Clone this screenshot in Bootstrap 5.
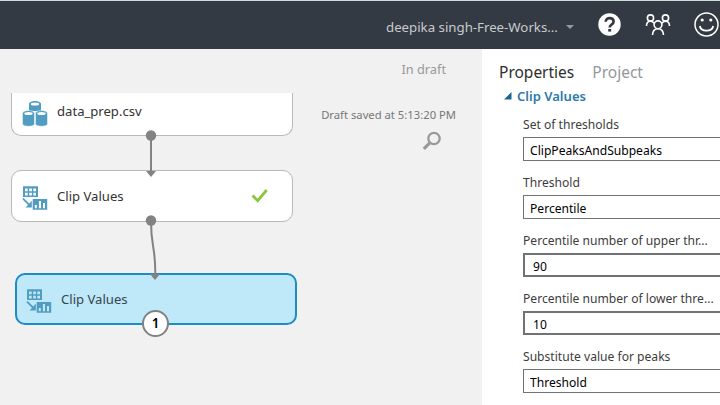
<!DOCTYPE html>
<html lang="en">
<head>
<meta charset="utf-8">
<meta name="viewport" content="width=device-width, initial-scale=1">
<title>Experiment</title>
<link href="https://cdn.jsdelivr.net/npm/bootstrap@5.3.0/dist/css/bootstrap.min.css" rel="stylesheet">
<script src="https://cdn.jsdelivr.net/npm/bootstrap@5.3.0/dist/js/bootstrap.bundle.min.js"></script>
<style>
  body { font-family: "Noto Sans", "Open Sans", sans-serif; font-size: 12.1px; line-height: 18px; color: #333; background: #fff; }
  .topbar { height: 49px; background: #343a43; border-top: 1px solid #cfdadd; padding: 3px 0 0 386px; color: #c8cacc; }
  .topbar svg { margin-bottom: 4px; }
  .workspace-name { font-size: 13.24px; width: 172px; }
  .caret { width: 0; border: 4px solid transparent; border-top-color: #98999b; border-bottom: 0; margin-left: 8px; }
  .help-icon { margin-left: 23.5px; }
  .people-icon { margin-left: 24px; }
  .smile-icon { margin-left: 23px; }
  .board { width: 482px; background: #f1f1f1; }
  .status { padding: 11px 26px 0 0; }
  .draft { font-size: 12.75px; color: #999; padding-right: 10px; }
  .saved { font-size: 11.26px; color: #777; margin-top: 28px; }
  .search-icon { margin: 7px 14px 0 0; }
  .module { left: 11px; width: 282px; height: 52px; background: #fff; border: 1.5px solid #b9b9b9; border-radius: 10px; padding: 0 0 0 10px; font-size: 13.1px; }
  .module-data { top: 44px; height: 43px; border-top: 0; border-radius: 0 0 10px 10px; padding-bottom: 6px; }
  .module-data .drums-icon { margin-top: 4px; }
  .module-clip { top: 121px; }
  .module-selected { left: 15px; top: 224px; height: 52px; background: #bfe8f8; border: 2px solid #1d8bc4; padding-left: 9px; color: #34464f; }
  .module svg { margin-right: 9px; }
  .module .check-icon { margin: 0 23px 0 auto; }
  .port-badge { left: 142px; top: 261px; width: 27px; height: 27px; background: #fff; border: 2px solid #828282; color: #000; font-size: 13.5px; font-weight: 600; padding-bottom: 1px; }
  .panel { padding: 12px 0 0 17px; min-width: 0; }
  .panel-tabs { font-size: 15.5px; line-height: 22px; gap: 18px; color: #2e2e2e; }
  .tab-off { color: #93989e; }
  .group-title { font-size: 13.06px; font-weight: 600; color: #2b7bab; margin: 4px 0 11px 5px; gap: 5px; }
  .fields { padding-left: 24px; gap: 13px; }
  .field { height: 45px; }
  .field label { height: 21px; line-height: 17px; white-space: nowrap; color: #3c3c3c; }
  .field .form-control { height: 24px; padding: 2px 6px 0; border: 1px solid #707274; border-right: 0; border-radius: 1px 0 0 1px; font-size: 12.1px; line-height: 18px; color: #000; }
  .field .numeric { border-width: 2px 0 2px 2px; border-radius: 0; padding: 2px 8px 0; }
</style>
</head>
<body class="vh-100 d-flex flex-column overflow-hidden">
<svg class="d-none">
  <symbol id="clip-glyph" viewBox="0 0 26 28">
    <g transform="translate(1 4.300)">
      <path fill="#519dc1" fill-rule="evenodd" d="M0 0h15v10.700H0zM2 2.200v2.800h2.700v-2.800zM6.200 2.200v2.800h2.700v-2.800zM10.300 2.200v2.800h2.700v-2.800zM2 6.500v2.800h2.700v-2.800zM6.200 6.500v2.800h2.700v-2.800zM10.300 6.500v2.800h2.700v-2.800zM9.700 12.700h14.500v10.800H9.700zM11.800 18.700v3.300h2v-3.300zM15.900 14.700v7.300h2.100v-7.300zM20 16.700v5.300h2v-5.300z"/>
      <path fill="none" stroke="#519dc1" stroke-width="1.800" d="M0 12.300l6.500 6.500"/>
      <path fill="#519dc1" d="M8.800 14.500v6.600H2.600z"/>
    </g>
  </symbol>
</svg>

<header class="topbar d-flex align-items-center flex-shrink-0 overflow-hidden">
  <span class="workspace-name text-nowrap flex-shrink-0">deepika singh-Free-Works...</span>
  <span class="caret"></span>
  <svg class="help-icon flex-shrink-0" width="23" height="23" viewBox="0 0 23 23">
    <circle cx="11.500" cy="11.500" r="11.200" fill="#fff"/>
    <path d="M7.700 8.700c0-5 7.900-4.600 7.900-.3 0 3.200-3.900 3-3.900 6.200" fill="none" stroke="#343a43" stroke-width="2.700"/>
    <path d="M10.200 16h3v2.600h-3z" fill="#343a43"/>
  </svg>
  <svg class="people-icon flex-shrink-0" width="26" height="23" viewBox="0 0 26 23" fill="none" stroke="#fff" stroke-width="1.600">
    <circle cx="5.500" cy="5" r="3.100"/><circle cx="20.500" cy="5" r="3.100"/><circle cx="13" cy="11.800" r="3.900"/>
    <path d="M1.500 13c0-3 1.500-4.800 4-4.800 1.800 0 3 .8 3.600 2.200M24.500 13c0-3-1.500-4.800-4-4.800-1.800 0-3 .8-3.600 2.200M7.500 22c.2-4 2.200-6.300 5.500-6.300s5.300 2.300 5.500 6.300"/>
  </svg>
  <svg class="smile-icon flex-shrink-0" width="25" height="25" viewBox="0.500 0.500 25 25" fill="none" stroke="#fff" stroke-width="1.500">
    <circle cx="13" cy="13" r="11.500"/>
    <path d="M6.300 14.500c1.200 6.200 12.200 6.200 13.400 0" stroke-width="1.800"/>
    <g fill="#fff" stroke="none"><circle cx="8.700" cy="8.500" r="1.600"/><circle cx="17.300" cy="8.500" r="1.600"/></g>
  </svg>
</header>

<div class="d-flex flex-grow-1">
  <main class="board position-relative flex-shrink-0">
    <div class="status d-flex flex-column align-items-end">
      <span class="draft">In draft</span>
      <span class="saved">Draft saved at 5:13:20 PM</span>
      <svg class="search-icon" width="20" height="20" viewBox="0 0 20 20" fill="none" stroke="#999">
        <circle cx="12" cy="7.500" r="5.700" stroke-width="2.300"/>
        <path d="M7.800 11.800L1.800 17.800" stroke-width="3.200"/>
      </svg>
    </div>

    <div class="module module-data position-absolute d-flex align-items-center">
      <svg class="drums-icon" width="26" height="27" viewBox="0 0 26 27" fill="#519dc1">
        <path d="M7 4c0-4 12-4 12 0v7H7z"/>
        <path d="M.500 13.500c0-4 12-4 12 0v10.500c0 3-12 3-12 0zM13.500 13.500c0-4 12-4 12 0v10.500c0 3-12 3-12 0z" stroke="#fff" stroke-width=".5"/>
        <g fill="#fff"><ellipse cx="13" cy="4" rx="4.200" ry="1.500"/><ellipse cx="6.500" cy="13.600" rx="4.200" ry="1.500"/><ellipse cx="19.500" cy="13.600" rx="4.200" ry="1.500"/></g>
      </svg>
      <span>data_prep.csv</span>
    </div>
    <div class="module module-clip position-absolute d-flex align-items-center">
      <svg width="26" height="28"><use href="#clip-glyph"/></svg>
      <span>Clip Values</span>
      <svg class="check-icon" width="18" height="16" viewBox="0 0 18 16"><path d="M1.500 7.500l5.200 5.200L15.700 2" fill="none" stroke="#8cc63f" stroke-width="2.800"/></svg>
    </div>
    <div class="module module-selected position-absolute d-flex align-items-center">
      <svg width="26" height="28"><use href="#clip-glyph"/></svg>
      <span>Clip Values</span>
    </div>

    <svg class="position-absolute top-0 start-0" width="300" height="280" viewBox="0 49 300 280">
      <path d="M151 136v36M151 221c0 27 4.500 25 4.300 53" fill="none" stroke="#828282" stroke-width="2"/>
      <g fill="#828282"><circle cx="151" cy="135.500" r="5.200"/><circle cx="151" cy="220.500" r="5.200"/><path d="M146 171h10l-5 6zM150 274h10l-5 6z"/></g>
    </svg>
    <span class="port-badge position-absolute rounded-circle d-flex align-items-center justify-content-center">1</span>
  </main>

  <aside class="panel flex-grow-1">
    <div class="panel-tabs d-flex"><span>Properties</span><span class="tab-off">Project</span></div>
    <div class="group-title d-flex align-items-center">
      <svg width="8" height="8" viewBox="0 0 8 8"><path d="M7.500 0v7.500H0z" fill="#1b668f"/></svg>
      <span>Clip Values</span>
    </div>
    <form class="fields d-flex flex-column">
      <div class="field"><label class="d-block" for="set">Set of thresholds</label><input class="form-control" id="set" value="ClipPeaksAndSubpeaks"></div>
      <div class="field"><label class="d-block" for="thr">Threshold</label><input class="form-control" id="thr" value="Percentile"></div>
      <div class="field"><label class="d-block" for="upper">Percentile number of upper thr...</label><input class="form-control numeric" id="upper" value="90"></div>
      <div class="field"><label class="d-block" for="lower">Percentile number of lower thre...</label><input class="form-control numeric" id="lower" value="10"></div>
      <div class="field"><label class="d-block" for="sub">Substitute value for peaks</label><input class="form-control" id="sub" value="Threshold"></div>
    </form>
  </aside>
</div>
</body>
</html>
